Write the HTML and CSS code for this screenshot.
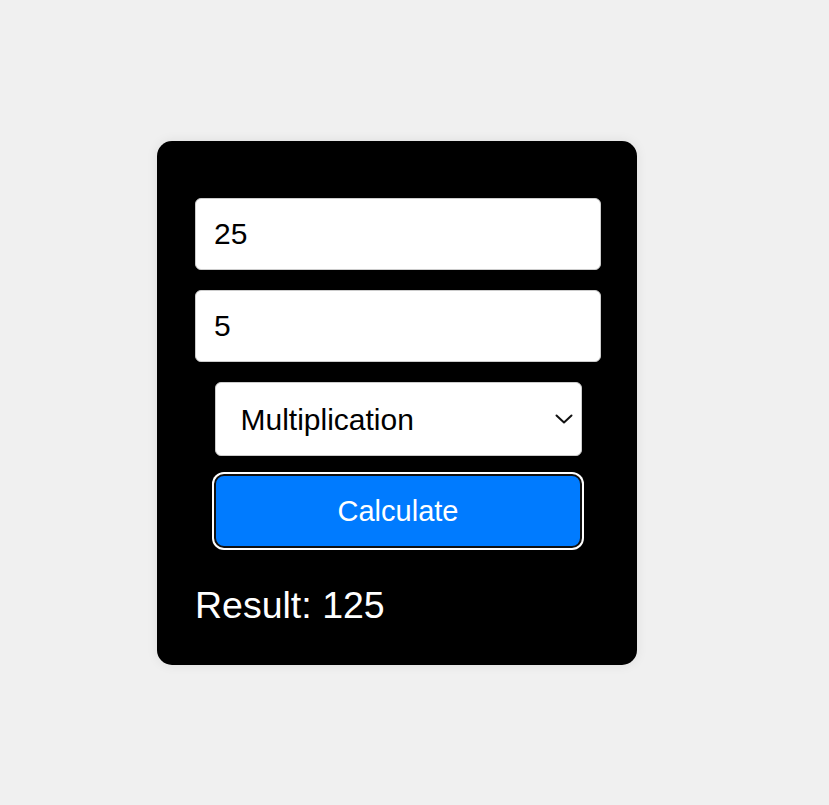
FILE: index.html
```html
<!DOCTYPE html>
<html lang="en">
<head>
<meta charset="utf-8">
<title>Calculator</title>
<link rel="stylesheet" href="styles.css">
</head>
<body>
<main class="page">
  <section class="card">
    <input class="field" type="text" value="25">
    <input class="field" type="text" value="5">
    <div class="select-wrap">
      <select class="op">
        <option>Multiplication</option>
        <option>Addition</option>
        <option>Subtraction</option>
        <option>Division</option>
      </select>
      <svg class="chev" width="18" height="10" viewBox="0 0 18 10" aria-hidden="true">
        <path d="M1.5 1.5 L9 8.5 L16.5 1.5" fill="none" stroke="#111" stroke-width="2" stroke-linecap="round" stroke-linejoin="round"/>
      </svg>
    </div>
    <button class="calc" type="button">Calculate</button>
    <div class="result">Result: 125</div>
  </section>
</main>
</body>
</html>
```

FILE: styles.css
```css
html, body {
  margin: 0;
  padding: 0;
  background: #f0f0f0;
  font-family: "Liberation Sans", Arial, sans-serif;
}

.page {
  min-height: 805px;
  box-sizing: border-box;
  padding: 141px 0 0 157px;
}

.card {
  width: 480px;
  height: 524px;
  box-sizing: border-box;
  background: #000;
  border-radius: 15px;
  box-shadow: 0 0 12px rgba(0, 0, 0, 0.08);
  padding: 57px 36px 0 38px;
  display: flex;
  flex-direction: column;
}

.field {
  width: 406px;
  height: 72px;
  box-sizing: border-box;
  margin: 0 0 20px 0;
  padding: 0 18px;
  border: 1px solid #ccc;
  border-radius: 6px;
  background: #fff;
  color: #000;
  font-family: "Liberation Sans", Arial, sans-serif;
  font-size: 30px;
  outline: none;
}

.select-wrap {
  position: relative;
  align-self: center;
  width: 367px;
  height: 74px;
}

.op {
  -webkit-appearance: none;
  appearance: none;
  width: 100%;
  height: 100%;
  box-sizing: border-box;
  margin: 0;
  padding: 0 40px 0 25px;
  border: 1px solid #ccc;
  border-radius: 6px;
  background: #fff;
  color: #000;
  font-family: "Liberation Sans", Arial, sans-serif;
  font-size: 30px;
  outline: none;
}

.chev {
  position: absolute;
  right: 9px;
  top: 32px;
  pointer-events: none;
}

.calc {
  align-self: center;
  width: 368px;
  height: 74px;
  box-sizing: border-box;
  margin: 18px 0 0 0;
  border: 2px solid #101010;
  border-radius: 10px;
  background: #007bff;
  color: #fff;
  font-family: "Liberation Sans", Arial, sans-serif;
  font-size: 29px;
  box-shadow: 0 0 0 2px #fff;
  cursor: pointer;
}

.result {
  margin-top: 37px;
  color: #fff;
  font-size: 37.5px;
  line-height: 41px;
}
```
